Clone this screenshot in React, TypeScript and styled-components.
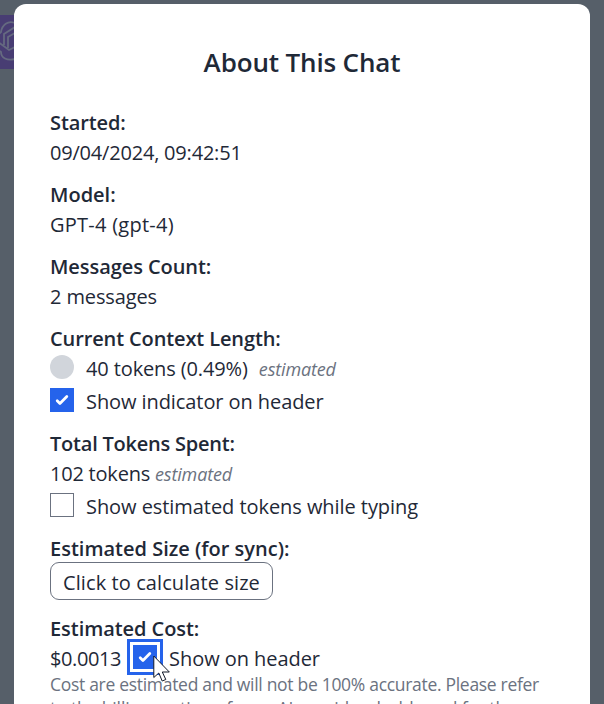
import * as React from "react";
import styled, { createGlobalStyle } from "styled-components";

const GlobalStyle = createGlobalStyle`
  * {
    box-sizing: border-box;
  }
  html,
  body {
    margin: 0;
    height: 704px;
    overflow: hidden;
  }
  body {
    background: #565f69;
    color: #1f2937;
    font-family: "Open Sans", "Noto Sans", sans-serif;
    font-size: 20px;
    line-height: 30px;
  }
`;

interface TextProps {
  $track?: number;
}

const Backdrop = styled.div`
  position: relative;
  height: 704px;
  padding: 4px 14px 0;
  overflow: hidden;
`;

const Avatar = styled.svg`
  position: absolute;
  left: 0;
  top: 15px;
  width: 14px;
  height: 54px;
  background: #483d73;
`;

const Modal = styled.div`
  position: relative;
  height: 760px;
  padding: 39px 36px;
  background: #fff;
  border-radius: 12px;
`;

const Title = styled.h3<TextProps>`
  margin: 0 0 26px;
  font-size: 26px;
  font-weight: 600;
  line-height: 39px;
  text-align: center;
  letter-spacing: ${props => props.$track || 0}px;
`;

const Section = styled.section`
  margin-bottom: 12px;
`;

const Label = styled.div<TextProps>`
  font-weight: 600;
  white-space: nowrap;
  letter-spacing: ${props => props.$track || 0}px;
`;

const Row = styled.div`
  display: flex;
  align-items: center;
  height: 30px;
  white-space: nowrap;
`;

const CheckRow = styled(Row)`
  height: 33px;
  padding-top: 2px;
`;

const Text = styled.span<TextProps>`
  letter-spacing: ${props => props.$track || 0}px;
`;

const Estimated = styled.i<TextProps & { $gap: number }>`
  margin-left: ${props => props.$gap}px;
  color: #6b7280;
  font-size: 18px;
  letter-spacing: ${props => props.$track || 0}px;
`;

const Dot = styled.span`
  width: 24px;
  height: 24px;
  margin: -4px 12px 0 0;
  border-radius: 50%;
  background: #d1d5db;
`;

const Box = styled.span<{ $checked?: boolean; $focused?: boolean }>`
  flex: none;
  display: flex;
  width: 24px;
  height: 24px;
  margin: ${props => (props.$focused ? "-5px 12px 0" : "-3px 12px 0 0")};
  border: 1px solid ${props => (props.$checked ? "#2563eb" : "#6b7280")};
  background: ${props => (props.$checked ? "#2563eb" : "#fff")};
  box-shadow: ${props =>
    props.$focused ? "0 0 0 3px #fff, 0 0 0 6px #2563eb" : "none"};
`;

const Button = styled.button<TextProps>`
  display: block;
  width: 223px;
  height: 38px;
  margin: -2px 0 14px;
  padding: 3px 0 0;
  border: 1px solid #6b7280;
  border-radius: 9px;
  background: #fff;
  color: inherit;
  font: inherit;
  white-space: nowrap;
  letter-spacing: ${props => props.$track || 0}px;
`;

const Notes = styled.div`
  margin-top: -2px;
  color: #6b7280;
  font-size: 17.5px;
  line-height: 24px;
  white-space: nowrap;
`;

const Note = styled.div<TextProps>`
  letter-spacing: ${props => props.$track || 0}px;
`;

const Cursor = styled.svg`
  position: absolute;
  left: 153px;
  top: 655px;
  width: 19px;
  height: 28px;
`;

const Checkbox = ({
  checked,
  focused,
}: {
  checked?: boolean;
  focused?: boolean;
}) => (
  <Box $checked={checked} $focused={focused}>
    {checked && (
      <svg width="22" height="22" viewBox="0 0 16 16" fill="#fff">
        <path d="M12.207 4.793a1 1 0 010 1.414l-5 5a1 1 0 01-1.414 0l-2-2a1 1 0 011.414-1.414L6.5 9.086l4.293-4.293a1 1 0 011.414 0z" />
      </svg>
    )}
  </Box>
);

const App: React.FC = () => (
  <>
    <GlobalStyle />
    <Backdrop>
      <Avatar viewBox="0 0 14 54" fill="none" stroke="#656a80" strokeWidth="1.8">
        <path d="M15 8C8 5 2 10 1 17c-1 1-2 2-3 3M4 30V19L15 12M8 33V22l7-4M-2 35c1 1 2 1 3 2 0 6 6 9 14 7M-2 27l11 8 6-3" />
      </Avatar>
      <Modal>
        <Title $track={-0.15}>About This Chat</Title>
        <Section>
          <Label $track={-0.1}>Started:</Label>
          <Row>
            <Text $track={-0.2}>09/04/2024, 09:42:51</Text>
          </Row>
        </Section>
        <Section>
          <Label>Model:</Label>
          <Row>
            <Text $track={0.25}>GPT-4 (gpt-4)</Text>
          </Row>
        </Section>
        <Section>
          <Label $track={-0.07}>Messages Count:</Label>
          <Row>
            <Text $track={-0.12}>2 messages</Text>
          </Row>
        </Section>
        <Section>
          <Label $track={-0.12}>Current Context Length:</Label>
          <Row>
            <Dot />
            <Text $track={-0.12}>40 tokens (0.49%)</Text>
            <Estimated $gap={11} $track={-0.15}>
              estimated
            </Estimated>
          </Row>
          <CheckRow>
            <Checkbox checked />
            <Text $track={-0.08}>Show indicator on header</Text>
          </CheckRow>
        </Section>
        <Section>
          <Label $track={-0.22}>Total Tokens Spent:</Label>
          <Row>
            <Text $track={-0.22}>102 tokens</Text>
            <Estimated $gap={5} $track={-0.15}>
              estimated
            </Estimated>
          </Row>
          <CheckRow>
            <Checkbox />
            <Text $track={-0.06}>Show estimated tokens while typing</Text>
          </CheckRow>
        </Section>
        <Section>
          <Label>Estimated Size (for sync):</Label>
          <Button $track={0.09}>Click to calculate size</Button>
        </Section>
        <Section>
          <Label $track={-0.06}>Estimated Cost:</Label>
          <Row>
            <Text $track={-0.4}>$0.0013</Text>
            <Checkbox checked focused />
            <Text $track={-0.06}>Show on header</Text>
          </Row>
          <Notes>
            <Note $track={-0.3}>
              Cost are estimated and will not be 100% accurate. Please refer
            </Note>
            <Note $track={-0.13}>
              to the billing section of your AI provider dashboard for the
            </Note>
          </Notes>
        </Section>
      </Modal>
      <Cursor viewBox="0 0 19 28" fill="#fff" stroke="#111827">
        <path d="M.8 1v21.5l5-4.5 3.4 8 3.6-1.5-3.5-7.5h7L.8 1z" />
      </Cursor>
    </Backdrop>
  </>
);

export default App;
